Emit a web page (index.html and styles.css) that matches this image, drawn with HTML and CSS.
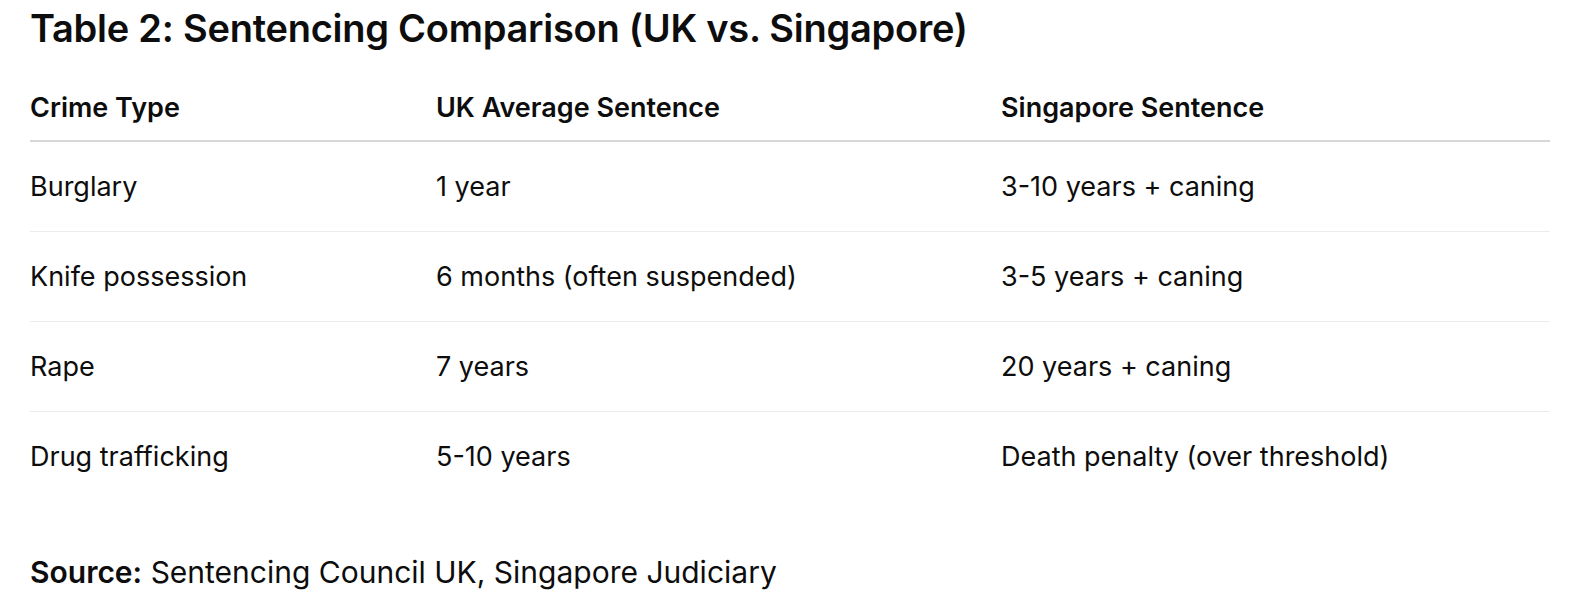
FILE: index.html
```html
<!DOCTYPE html>
<html lang="en">
<head>
<meta charset="utf-8">
<title>Sentencing Comparison</title>
<link rel="stylesheet" href="styles.css">
</head>
<body>
<main class="page">
  <h2 class="title">Table 2: Sentencing Comparison (UK vs. Singapore)</h2>
  <table class="cmp">
    <colgroup>
      <col class="c1">
      <col class="c2">
      <col class="c3">
    </colgroup>
    <thead>
      <tr>
        <th>Crime Type</th>
        <th>UK Average Sentence</th>
        <th>Singapore Sentence</th>
      </tr>
    </thead>
    <tbody>
      <tr>
        <td>Burglary</td>
        <td>1 year</td>
        <td>3-10 years + caning</td>
      </tr>
      <tr>
        <td>Knife possession</td>
        <td>6 months (often suspended)</td>
        <td>3-5 years + caning</td>
      </tr>
      <tr>
        <td>Rape</td>
        <td>7 years</td>
        <td>20 years + caning</td>
      </tr>
      <tr>
        <td>Drug trafficking</td>
        <td>5-10 years</td>
        <td>Death penalty (over threshold)</td>
      </tr>
    </tbody>
  </table>
  <p class="source"><strong>Source:</strong> Sentencing Council UK, Singapore Judiciary</p>
</main>
</body>
</html>
```
FILE: styles.css
```css
html, body {
  margin: 0;
  padding: 0;
  background: #ffffff;
}
body {
  font-family: Inter, "Noto Sans", "Liberation Sans", sans-serif;
  color: #0d0d0d;
}
.page {
  padding: 6px 35px 0 30px;
}
.title {
  margin: 0;
  font-size: 38px;
  line-height: 44px;
  font-weight: 600;
  letter-spacing: -0.25px;
}
.cmp {
  width: 100%;
  margin-top: 24px;
  border-collapse: collapse;
  font-size: 27px;
  line-height: 37px;
}
.c1 { width: 406px; }
.c2 { width: 565px; }
.cmp th {
  text-align: left;
  font-weight: 600;
  padding: 15px 0 14px 0;
  border-bottom: 2px solid #d7d7d7;
}
.cmp td {
  padding: 26px 0;
  border-bottom: 1px solid #ececec;
  font-weight: 400;
}
.cmp tbody tr:last-child td {
  border-bottom: none;
}
.source {
  margin: 52px 0 0 0;
  font-size: 30px;
  line-height: 38px;
}
.source strong {
  font-weight: 600;
}
```
